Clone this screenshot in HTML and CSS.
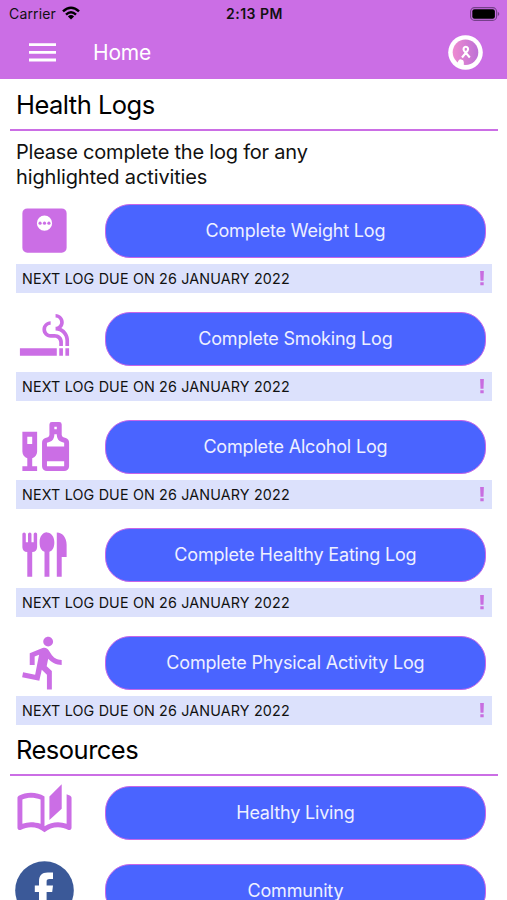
FILE: index.html
```html
<!DOCTYPE html>
<html lang="en">
<head>
<meta charset="utf-8">
<title>Home</title>
<link rel="stylesheet" href="styles.css">
</head>
<body>
<header class="top">
  <div class="status">
    <div class="carrier"><span>Carrier</span>
      <svg class="wifi" viewBox="0 0 18 14"><g fill="none" stroke="#000" stroke-width="2.5"><path d="M1 5.4Q9-2 17 5.4"/><path d="M4 8.6Q9 4 14 8.6"/></g><path d="M5.9 10.4Q9 7.8 12.1 10.4L9 13.6z"/></svg>
    </div>
    <div class="time">2:13 PM</div>
    <svg class="battery" viewBox="0 0 30 14"><rect x=".6" y=".6" width="26" height="12.8" rx="4" fill="none" stroke="#75408a" stroke-width="1.1"/><rect x="2.3" y="2.3" width="22.6" height="9.4" rx="2.2"/><path d="M27.8 4.8q3 2.2 0 4.4z" fill="#75408a"/></svg>
  </div>
  <div class="nav">
    <svg class="menu" viewBox="0 0 27 19"><path d="M0 1.6h27M0 9.3h27M0 17h27" stroke="#fff" stroke-width="2.8"/></svg>
    <h1 class="title">Home</h1>
    <svg class="avatar" viewBox="0 0 35 35"><defs><linearGradient id="g"><stop offset="0" stop-color="#ee8bd0"/><stop offset="1" stop-color="#bd70d6"/></linearGradient></defs><circle cx="17.5" cy="17.5" r="17.3" fill="#fff"/><circle cx="17.5" cy="17.3" r="12.8" fill="url(#g)"/><path d="M10 29v-2.4q1-2.6 3.2-2.2 2.6.4 2.6 2.6V31z" fill="#fff"/><path d="M14 22.5L19.6 15.6C20.8 13.6 19.6 11.8 17.8 11.8S14.8 13.6 16 15.6L21.8 22.5" fill="none" stroke="#fff" stroke-width="2.1"/></svg>
  </div>
</header>
<main>
  <section>
    <h2 class="heading logs">Health Logs</h2>
    <p class="intro"><span class="line1">Please complete the log for any</span><br><span class="line2">highlighted activities</span></p>
    <article class="log">
      <div class="row"><svg class="icon" viewBox="0 0 24 24"><path fill-rule="evenodd" d="M19 3H5a2 2 0 0 0-2 2v14a2 2 0 0 0 2 2h14a2 2 0 0 0 2-2V5a2 2 0 0 0-2-2zm-7 9.1a3.1 3.1 0 1 1 0-6.2 3.1 3.1 0 0 1 0 6.2z"/><circle cx="10.2" cy="9" r=".65"/><circle cx="12" cy="9" r=".65"/><circle cx="13.8" cy="9" r=".65"/></svg><a class="button b1">Complete Weight Log</a></div>
      <div class="due"><span>NEXT LOG DUE ON 26 JANUARY 2022</span><svg class="alert" viewBox="0 0 4 16"><path d="M0 0h4l-.4 10.3H.4zM.2 12h3.6v3.2H.2z"/></svg></div>
    </article>
    <article class="log">
      <div class="row"><svg class="icon" viewBox="0 0 24 24"><path d="M2 16h15v3H2zm18.5 0H22v3h-1.5zM18 16h1.5v3H18zm.85-8.27c.62-.61 1-1.45 1-2.38C19.85 3.5 18.35 2 16.5 2v1.5c1.02 0 1.85.83 1.85 1.85S17.52 7.2 16.5 7.2v1.5c2.24 0 4 1.83 4 4.07V15H22v-2.24c0-2.22-1.28-4.14-3.15-5.03zm-2.82 2.47H14.5c-1.02 0-1.85-.98-1.85-2s.83-1.75 1.85-1.75v-1.5c-1.85 0-3.35 1.5-3.35 3.35s1.5 3.35 3.35 3.35h1.53c1.05 0 1.97.74 1.97 2.05V15h1.5v-1.64c0-1.81-1.46-3.16-3.47-3.16z"/></svg><a class="button b2">Complete Smoking Log</a></div>
      <div class="due"><span>NEXT LOG DUE ON 26 JANUARY 2022</span><svg class="alert" viewBox="0 0 4 16"><path d="M0 0h4l-.4 10.3H.4zM.2 12h3.6v3.2H.2z"/></svg></div>
    </article>
    <article class="log">
      <div class="row"><svg class="icon" viewBox="0 0 24 24"><path fill-rule="evenodd" d="M3 14c0 1.3.84 2.4 2 2.82V20H3v2h6v-2H7v-3.18C8.16 16.4 9 15.3 9 14V6H3v8zM5 8h2v3H5V8zM20.64 8.54l-.96-.32A1 1 0 0 1 19 7.27V3a1 1 0 0 0-1-1h-3a1 1 0 0 0-1 1v4.27a1 1 0 0 1-.68.95l-.96.32A2 2 0 0 0 11 10.44V20a2 2 0 0 0 2 2h7a2 2 0 0 0 2-2v-9.56a2 2 0 0 0-1.36-1.9zM16 4h1v1h-1V4zm-3 6.44l.95-.32A3 3 0 0 0 16 7.28V7h1v.28a3 3 0 0 0 2.05 2.85l.95.31V12h-7v-1.56zM20 20h-7v-2h7v2z"/></svg><a class="button b3">Complete Alcohol Log</a></div>
      <div class="due"><span>NEXT LOG DUE ON 26 JANUARY 2022</span><svg class="alert" viewBox="0 0 4 16"><path d="M0 0h4l-.4 10.3H.4zM.2 12h3.6v3.2H.2z"/></svg></div>
    </article>
    <article class="log">
      <div class="row"><svg class="icon" viewBox="0 0 24 24"><path d="M3 3.7a.7.7 0 0 1 1.4 0V7h.9V3.7a.7.7 0 0 1 1.4 0V7h.9V3.7a.7.7 0 0 1 1.4 0V9q-.1 1.8-2 2v10H5V11q-1.9-.2-2-2zM13 3c1.8 0 3 1.8 3 4s-.8 3.5-2 3.9V21h-2V10.9c-1.2-.4-2-1.7-2-3.9s1.2-4 3-4zM17 3c2.4 0 4 2.2 4 5v5h-2v8h-2z"/></svg><a class="button b4">Complete Healthy Eating Log</a></div>
      <div class="due"><span>NEXT LOG DUE ON 26 JANUARY 2022</span><svg class="alert" viewBox="0 0 4 16"><path d="M0 0h4l-.4 10.3H.4zM.2 12h3.6v3.2H.2z"/></svg></div>
    </article>
    <article class="log">
      <div class="row"><svg class="icon" viewBox="0 0 24 24"><path d="M13.49 5.48c1.1 0 2-.9 2-2s-.9-2-2-2-2 .9-2 2 .9 2 2 2zm-3.6 13.9l1-4.4 2.1 2v6h2v-7.5l-2.1-2 .6-3c1.3 1.5 3.3 2.5 5.5 2.5v-2c-1.9 0-3.5-1-4.3-2.4l-1-1.6c-.4-.6-1-1-1.7-1-.3 0-.5.1-.8.1l-5.2 2.2v4.7h2v-3.4l1.8-.7-1.6 8.1-4.9-1-.4 2 7 1.4z"/></svg><a class="button b5">Complete Physical Activity Log</a></div>
      <div class="due"><span>NEXT LOG DUE ON 26 JANUARY 2022</span><svg class="alert" viewBox="0 0 4 16"><path d="M0 0h4l-.4 10.3H.4zM.2 12h3.6v3.2H.2z"/></svg></div>
    </article>
  </section>
  <section class="resources">
    <h2 class="heading res">Resources</h2>
    <div class="row link"><svg class="icon" viewBox="0 0 24 24"><path fill-rule="evenodd" d="M22.47 5.2C22 4.96 21.51 4.76 21 4.59v12.03c-1.14-.41-2.31-.62-3.5-.62-1.9 0-3.78.54-5.5 1.58V5.48C10.38 4.55 8.51 4 6.5 4c-1.79 0-3.48.44-4.97 1.2-.33.16-.53.51-.53.88v12.08c0 .58.47.99 1 .99.16 0 .32-.04.48-.12C3.69 18.4 5.05 18 6.5 18c2.07 0 3.98.82 5.5 2 1.52-1.18 3.43-2 5.5-2 1.45 0 2.81.4 4.02 1.04.16.08.32.12.48.12.52 0 1-.41 1-.99V6.08c0-.37-.2-.72-.53-.88zM10.4 16.62C9.2 16.21 7.69 16 6.5 16s-2.36.21-3.5.62V6.71C4.11 6.24 5.28 6 6.5 6c1.2 0 2.7.25 3.9.72zM19 .5l-5 5V15l5-4.5z"/></svg><a class="button b6">Healthy Living</a></div>
    <div class="row link"><svg class="icon" viewBox="0 0 59 59"><circle cx="29.5" cy="29.5" r="29.3" fill="#3b5998"/><path fill="#fff" d="M24 48V31h-4.2v-6.4H24v-4.2c0-6 2.8-8.9 8.7-8.9H38v6.4h-3.4c-2.5 0-3 .8-3 3v3.7H38L37.2 31h-5.6v17z"/></svg><a class="button b7">Community</a></div>
  </section>
</main>
</body>
</html>
```
FILE: styles.css
```css
* { box-sizing: border-box; }
html, body { margin: 0; height: 900px; overflow: hidden; }
body { background: #fff; color: #111; font-family: Inter, "Liberation Sans", sans-serif; }
svg { display: block; flex: none; }
h1, h2, p { margin: 0; font-weight: 400; }

.top { height: 79px; background: #cb6ee5; }
.status { height: 27px; display: grid; grid-template-columns: 1fr auto 1fr; align-items: center; padding: 0 7px 0 9px; }
.carrier { display: flex; align-items: center; gap: 6px; font-size: 14px; letter-spacing: .15px; }
.wifi { width: 18px; height: 14px; margin-top: -2px; }
.time { font-size: 14px; font-weight: 600; letter-spacing: .5px; }
.battery { width: 30px; height: 14px; justify-self: end; }
.nav { height: 50px; display: flex; align-items: center; padding: 0 24px 0 29px; }
.menu { width: 27px; height: 19px; }
.title { margin-left: 37px; color: #fff; font-size: 21px; letter-spacing: -.2px; }
.avatar { width: 35px; height: 35px; margin-left: auto; }

.heading { height: 51.5px; margin: 0 9px 0 10px; padding: 0 6px; border-bottom: 2.5px solid #cb6ee5; font-size: 25.5px; line-height: 51px; letter-spacing: -.52px; color: #000; }
.intro { height: 73px; padding: 9.5px 16px 0; font-size: 20px; line-height: 24.5px; }
.line1 { letter-spacing: -.21px; }
.line2 { letter-spacing: -.13px; }
.log { height: 108px; }
.row { display: flex; align-items: center; height: 54px; padding: 0 21px 0 15.3px; }
.icon { width: 59px; height: 59px; fill: #cb6ee5; }
.button { flex: 1; height: 54px; margin-left: 30.5px; border: 1.5px solid #c765e8; border-radius: 25px; background: #4a64ff; color: #eef0ff; font-size: 18px; line-height: 52px; letter-spacing: -.18px; text-align: center; }
.due { display: flex; align-items: center; justify-content: space-between; height: 29.5px; margin: 6px 15px 0 15.5px; padding: 0 8px 0 6.5px; background: #dce1fc; font-size: 14.3px; letter-spacing: .17px; }
.alert { width: 4px; height: 15px; fill: #c86de0; }
.resources { margin-top: -19px; }
.res { line-height: 50px; margin-bottom: 9.5px; }
.link { margin-bottom: 24px; }
```
